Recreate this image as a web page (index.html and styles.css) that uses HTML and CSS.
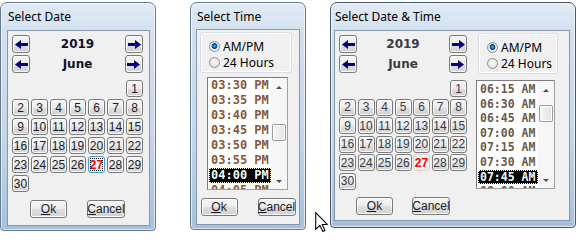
FILE: index.html
```html
<!DOCTYPE html>
<html lang="en">
<head>
    <meta charset="UTF-8">
    <meta name="viewport" content="width=device-width, initial-scale=1.0">
    <title>Date and Time Pickers</title>
    <link rel="stylesheet" href="styles.css">
</head>
<body>

    <div class="desk">

        <!-- Date only -->
        <div class="win win-date">
            <div class="title">Select Date</div>
            <div class="client">
                <div class="picker">
                    <div class="nav">
                        <button class="btn arrow"><svg width="13" height="9" viewBox="0 0 13 9"><path d="M0 4.5 6 0v3h7v3H6v3z"/></svg></button>
                        <span class="nav-label">2019</span>
                        <button class="btn arrow"><svg width="13" height="9" viewBox="0 0 13 9"><path d="M13 4.5 7 0v3H0v3h7v3z"/></svg></button>
                    </div>
                    <div class="nav">
                        <button class="btn arrow"><svg width="13" height="9" viewBox="0 0 13 9"><path d="M0 4.5 6 0v3h7v3H6v3z"/></svg></button>
                        <span class="nav-label">June</span>
                        <button class="btn arrow"><svg width="13" height="9" viewBox="0 0 13 9"><path d="M13 4.5 7 0v3H0v3h7v3z"/></svg></button>
                    </div>
                    <div class="days">
                        <span></span><span></span><span></span><span></span><span></span><span></span>
                        <button class="btn day">1</button>
                        <button class="btn day">2</button><button class="btn day">3</button><button class="btn day">4</button><button class="btn day">5</button><button class="btn day">6</button><button class="btn day">7</button><button class="btn day">8</button>
                        <button class="btn day">9</button><button class="btn day">10</button><button class="btn day">11</button><button class="btn day">12</button><button class="btn day">13</button><button class="btn day">14</button><button class="btn day">15</button>
                        <button class="btn day">16</button><button class="btn day">17</button><button class="btn day">18</button><button class="btn day">19</button><button class="btn day">20</button><button class="btn day">21</button><button class="btn day">22</button>
                        <button class="btn day">23</button><button class="btn day">24</button><button class="btn day">25</button><button class="btn day">26</button><button class="btn day today focus">27</button><button class="btn day">28</button><button class="btn day">29</button>
                        <button class="btn day">30</button>
                    </div>
                    <div class="actions">
                        <button class="btn cmd"><u>O</u>k</button>
                        <button class="btn cmd cancel"><u>C</u>ancel</button>
                    </div>
                </div>
            </div>
        </div>

        <!-- Time only -->
        <div class="win win-time">
            <div class="title">Select Time</div>
            <div class="client">
                <div class="group">
                    <label class="radio"><span class="dot on"></span>AM/PM</label>
                    <label class="radio"><span class="dot"></span>24 Hours</label>
                </div>
                <div class="list">
                    <div class="items">
                        <div class="item">03:30 PM</div>
                        <div class="item">03:35 PM</div>
                        <div class="item">03:40 PM</div>
                        <div class="item">03:45 PM</div>
                        <div class="item">03:50 PM</div>
                        <div class="item">03:55 PM</div>
                        <div class="item sel">04:00 PM</div>
                        <div class="item">04:05 PM</div>
                    </div>
                    <div class="sbar">
                        <span class="up"></span>
                        <span class="thumb" style="margin-top: 35px;"></span>
                        <span class="down"></span>
                    </div>
                </div>
                <div class="actions">
                    <button class="btn cmd"><u>O</u>k</button>
                    <button class="btn cmd cancel"><u>C</u>ancel</button>
                </div>
            </div>
        </div>

        <!-- Date and time -->
        <div class="win win-both">
            <div class="title">Select Date &amp; Time</div>
            <div class="client">
                <div class="picker">
                    <div class="nav">
                        <button class="btn arrow"><svg width="13" height="9" viewBox="0 0 13 9"><path d="M0 4.5 6 0v3h7v3H6v3z"/></svg></button>
                        <span class="nav-label">2019</span>
                        <button class="btn arrow"><svg width="13" height="9" viewBox="0 0 13 9"><path d="M13 4.5 7 0v3H0v3h7v3z"/></svg></button>
                    </div>
                    <div class="nav">
                        <button class="btn arrow"><svg width="13" height="9" viewBox="0 0 13 9"><path d="M0 4.5 6 0v3h7v3H6v3z"/></svg></button>
                        <span class="nav-label">June</span>
                        <button class="btn arrow"><svg width="13" height="9" viewBox="0 0 13 9"><path d="M13 4.5 7 0v3H0v3h7v3z"/></svg></button>
                    </div>
                    <div class="days">
                        <span></span><span></span><span></span><span></span><span></span><span></span>
                        <button class="btn day">1</button>
                        <button class="btn day">2</button><button class="btn day">3</button><button class="btn day">4</button><button class="btn day">5</button><button class="btn day">6</button><button class="btn day">7</button><button class="btn day">8</button>
                        <button class="btn day">9</button><button class="btn day">10</button><button class="btn day">11</button><button class="btn day">12</button><button class="btn day">13</button><button class="btn day">14</button><button class="btn day">15</button>
                        <button class="btn day">16</button><button class="btn day">17</button><button class="btn day">18</button><button class="btn day">19</button><button class="btn day">20</button><button class="btn day">21</button><button class="btn day">22</button>
                        <button class="btn day">23</button><button class="btn day">24</button><button class="btn day">25</button><button class="btn day">26</button><button class="btn day today flat">27</button><button class="btn day">28</button><button class="btn day">29</button>
                        <button class="btn day">30</button>
                    </div>
                    <div class="actions">
                        <button class="btn cmd"><u>O</u>k</button>
                        <button class="btn cmd cancel"><u>C</u>ancel</button>
                    </div>
                </div>
                <div class="side">
                    <div class="group">
                        <label class="radio"><span class="dot on"></span>AM/PM</label>
                        <label class="radio"><span class="dot"></span>24 Hours</label>
                    </div>
                    <div class="list">
                        <div class="items">
                            <div class="item">06:15 AM</div>
                            <div class="item">06:30 AM</div>
                            <div class="item">06:45 AM</div>
                            <div class="item">07:00 AM</div>
                            <div class="item">07:15 AM</div>
                            <div class="item">07:30 AM</div>
                            <div class="item sel">07:45 AM</div>
                            <div class="item">08:00 AM</div>
                        </div>
                        <div class="sbar">
                            <span class="up"></span>
                            <span class="thumb" style="margin-top: 13px;"></span>
                            <span class="down"></span>
                        </div>
                    </div>
                </div>
            </div>
        </div>

    </div>

    <!-- mouse pointer -->
    <svg class="pointer" width="13" height="20" viewBox="0 0 12 19">
        <path d="M0.5 0.5V16.5L4.5 12.8L7.3 18.5L9.3 17.6L6.6 11.8H11.5Z" fill="#fff" stroke="#000" stroke-width="1" stroke-linejoin="round"/>
    </svg>

</body>
</html>
```

FILE: styles.css
```css
body {
    margin: 0;
    background: #fff;
    font-family: "Noto Sans", sans-serif;
    position: relative;
    width: 578px;
    height: 245px;
    overflow: hidden;
}
.desk {
    display: flex;
    align-items: flex-start;
    padding-top: 2px;
}

/* window frame */
.win {
    box-sizing: border-box;
    display: flex;
    flex-direction: column;
    border: 1px solid #667a90;
    border-radius: 7px 7px 4px 4px;
    background: linear-gradient(180deg, #e2ebf6 0, #d3e1ef 28px, #c4d6e9 60%, #a6c0db 100%);
    box-shadow: inset 0 0 0 1px rgba(255, 255, 255, .6);
}
.win-date {
    width: 156px;
    height: 229px;
    padding: 0 5px 4px 6px;
}
.win-time {
    width: 116px;
    height: 228px;
    margin-left: 34px;
    padding: 0 5px 4px 5px;
}
.win-both {
    width: 246px;
    height: 226px;
    margin-left: 24px;
    padding: 0 5px 6px 3px;
    border-color: #4c5866;
}
.title {
    height: 27px;
    line-height: 28px;
    font-size: 12px;
    color: #000;
    padding-left: 1px;
    white-space: nowrap;
}
.win-time .title {
    height: 26px;
    line-height: 27px;
}
.client {
    flex: 1;
    background: #f0f0f0;
    border: 1px solid #8598ad;
}
.win-both .client {
    display: flex;
}

/* buttons */
.btn {
    box-sizing: border-box;
    display: flex;
    align-items: center;
    justify-content: center;
    padding: 0;
    border: 1px solid #7a7a7a;
    border-radius: 3px;
    background: linear-gradient(#f5f5f5 0%, #ececec 50%, #dedede 51%, #d2d2d2 100%);
    box-shadow: inset 0 0 0 1px #fbfbfb;
    font-family: "Liberation Sans Narrow", "Liberation Sans", sans-serif;
    font-size: 12px;
    color: #1a1a2a;
}

/* date part */
.picker {
    width: 131px;
    margin: 4px 0 0 4px;
}
.nav {
    display: flex;
    justify-content: space-between;
    align-items: center;
    height: 18px;
}
.nav + .nav {
    margin-top: 2px;
}
.arrow {
    width: 18px;
    height: 18px;
}
.arrow svg {
    fill: #000080;
}
.nav-label {
    font-family: "DejaVu Sans", sans-serif;
    font-weight: bold;
    font-size: 12px;
    color: #10102a;
}
.days {
    display: grid;
    grid-template-columns: repeat(7, 17px);
    grid-auto-rows: 17px;
    gap: 2px;
    margin-top: 7px;
}
.day.focus {
    border-color: #3c9ad8;
    background: #e5f3fb;
    box-shadow: inset 0 0 0 1px #fff;
    outline: 1px dotted #000;
    outline-offset: -3px;
}
.day.flat {
    background: #f0f0f0;
    border-color: #d4d4d4;
    box-shadow: none;
}
.actions {
    display: flex;
    justify-content: center;
    gap: 20px;
    margin-top: 8px;
}
.cmd {
    width: 37px;
    height: 18px;
}
.cancel {
    width: 38px;
}

/* time part */
.group {
    box-sizing: border-box;
    width: 92px;
    height: 41px;
    margin: 2px 0 0 3px;
    padding: 5px 0 0 8px;
    border: 1px solid #d5dfe5;
    border-radius: 3px;
    box-shadow: inset 0 0 0 1px #fff;
}
.radio {
    display: flex;
    align-items: center;
    gap: 3px;
    height: 16px;
    font-size: 12px;
    color: #000;
}
.dot {
    box-sizing: border-box;
    width: 11px;
    height: 11px;
    border-radius: 50%;
    border: 1px solid #8e8f8f;
    background: radial-gradient(circle at 50% 40%, #fdfdfd, #d8d8d8);
}
.dot.on {
    background: radial-gradient(circle at 50% 45%, #63b8ee 0, #1058a8 1.8px, #0d4a93 2.6px, #dfe8f1 3.2px, #f6f6f6 100%);
}
.list {
    box-sizing: border-box;
    display: flex;
    width: 81px;
    height: 113px;
    margin: 4px 0 0 10px;
    background: #fff;
    border: 1px solid #a0a0a0;
    border-top-color: #7a7a7a;
    border-left-color: #7a7a7a;
    padding-left: 1px;
    overflow: hidden;
}
.items {
    flex: 1;
    overflow: hidden;
    font-family: "DejaVu Sans Mono", monospace;
    font-weight: bold;
    font-size: 12px;
    line-height: 15px;
    color: #85593a;
}
.item {
    height: 15px;
    padding-left: 2px;
    white-space: nowrap;
}
.item.sel {
    background: #000;
    color: #eefcff;
    outline: 1px dotted #fffbd0;
    outline-offset: -1px;
}
.sbar {
    width: 16px;
    background: #f6f6f6;
    display: flex;
    flex-direction: column;
    align-items: center;
}
.up {
    margin-top: 8px;
    border-left: 3px solid transparent;
    border-right: 3px solid transparent;
    border-bottom: 3px solid #505050;
}
.down {
    margin-top: auto;
    margin-bottom: 6px;
    border-left: 3px solid transparent;
    border-right: 3px solid transparent;
    border-top: 3px solid #505050;
}
.thumb {
    box-sizing: border-box;
    width: 14px;
    height: 17px;
    border: 1px solid #9b9b9b;
    border-radius: 2px;
    background: linear-gradient(90deg, #f4f4f4, #e4e4e4);
    box-shadow: inset 0 0 0 1px #fff;
}

/* combined dialog */
.win-both .picker {
    width: 128px;
    margin: 4px 0 0 4px;
}
.win-both .days {
    grid-template-columns: repeat(7, 17px);
    gap: 1.5px;
    margin-top: 7px;
}
.win-both .actions {
    gap: 19px;
    margin-top: 7px;
}
.win-both .day,
.win-both .nav-label {
    color: #3a3a4a;
}
.day.today,
.win-both .day.today {
    color: #ff0000;
    font-weight: bold;
}
.side {
    margin-left: 8px;
}
.win-both .group {
    width: 80px;
}
.win-both .list {
    width: 79px;
    height: 109px;
    margin: 6px 0 0 1px;
}
.win-both .items {
    font-size: 11.5px;
    line-height: 14.6px;
    color: #6a5a4a;
    padding-top: 1px;
}
.win-both .item {
    height: 14.6px;
}

.pointer {
    position: absolute;
    left: 315px;
    top: 212px;
}
```
